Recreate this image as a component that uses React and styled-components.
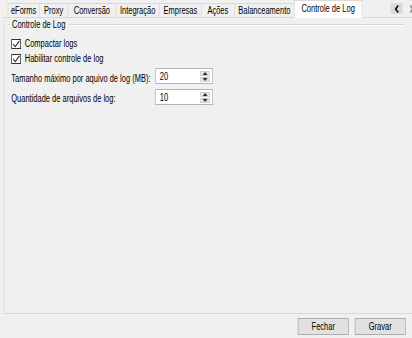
import React from "react";
import styled, { createGlobalStyle } from "styled-components";

// a captura original foi comprimida na horizontal (~0.75), então a janela
// é montada em 550px e achatada com scaleX
const SQUEEZE = 0.75;

const GlobalStyle = createGlobalStyle`
  html, body {
    margin: 0;
    overflow: hidden;
    background: #f0f0f0;
  }
  body {
    font-family: "Liberation Sans", Arial, sans-serif;
    font-size: 10px;
    color: #000;
  }
`;

// abas do controle (largura vem da tela original)
const tabs = [
  { label: "eForms", width: 43 },
  { label: "Proxy", width: 39 },
  { label: "Conversão", width: 65 },
  { label: "Integração", width: 59 },
  { label: "Empresas", width: 57 },
  { label: "Ações", width: 45 },
  { label: "Balanceamento", width: 81 },
  { label: "Controle de Log", width: 91, active: true },
];

const Check = () => (
  <svg width="11" height="8" viewBox="0 0 11 8">
    <path d="M1.5 3.8 L4.3 6.6 L9.8 1" fill="none" stroke="#222" strokeWidth="1.2" />
  </svg>
);

const Arrow = ({ up }) => (
  <svg width="7" height="3" viewBox="0 0 7 3">
    <path d={up ? "M0 3 L3.5 0 L7 3 Z" : "M0 0 L3.5 3 L7 0 Z"} fill="#333" />
  </svg>
);

const Chevron = ({ left, color }) => (
  <svg width="8" height="8" viewBox="0 0 8 8">
    <path
      d={left ? "M6 0.5 L2.5 4 L6 7.5" : "M2 0.5 L5.5 4 L2 7.5"}
      fill="none"
      stroke={color}
      strokeWidth="2"
    />
  </svg>
);

const SpinBox = ({ value }) => (
  <Spin>
    <SpinValue>{value}</SpinValue>
    <SpinButtons>
      <SpinBtn>
        <Arrow up />
      </SpinBtn>
      <SpinBtn>
        <Arrow />
      </SpinBtn>
    </SpinButtons>
  </Spin>
);

const App = () => {
  return (
    <>
      <GlobalStyle />
      <Window>
        <TabControl>
          <TabStrip>
            {tabs.map((t) => (
              <Tab key={t.label} $width={t.width} $active={t.active}>
                {t.label}
              </Tab>
            ))}
            <Scroller>
              <ScrollBtn $pressed>
                <Chevron left color="#111" />
              </ScrollBtn>
              <ScrollBtn>
                <Chevron color="#8a8a8a" />
              </ScrollBtn>
            </Scroller>
          </TabStrip>

          <TabPage>
            <GroupBox>
              <Legend>
                <LegendStub />
                <LegendText>Controle de Log</LegendText>
                <LegendLine />
              </Legend>

              <Checks>
                <CheckRow>
                  <CheckBox>
                    <Check />
                  </CheckBox>
                  Compactar logs
                </CheckRow>
                <CheckRow>
                  <CheckBox>
                    <Check />
                  </CheckBox>
                  Habilitar controle de log
                </CheckRow>
              </Checks>

              <Fields>
                <FieldLabel $offset={4}>Tamanho máximo por aquivo de log (MB):</FieldLabel>
                <SpinBox value="20" />
                <FieldLabel $offset={2}>Quantidade de arquivos de log:</FieldLabel>
                <SpinBox value="10" />
              </Fields>
            </GroupBox>
          </TabPage>
        </TabControl>

        <ButtonBar>
          <Button>Fechar</Button>
          <Button>Gravar</Button>
        </ButtonBar>
      </Window>
    </>
  );
};
export default App;

// janela inteira
const Window = styled.div`
  width: 550px;
  height: 338px;
  overflow: hidden;
  display: flex;
  flex-direction: column;
  background: #f0f0f0;
  transform: scaleX(${SQUEEZE});
  transform-origin: 0 0;
`;

const TabControl = styled.div`
  flex: 1;
  display: flex;
  flex-direction: column;
`;

const TabStrip = styled.div`
  height: 18px;
  display: flex;
  align-items: flex-end;
  padding-left: 11px;
  position: relative;
  z-index: 1;
`;

const Tab = styled.div`
  width: ${(p) => p.$width}px;
  height: ${(p) => (p.$active ? 18 : 15)}px;
  box-sizing: border-box;
  display: flex;
  align-items: ${(p) => (p.$active ? "flex-start" : "center")};
  justify-content: center;
  padding-top: ${(p) => (p.$active ? 2 : 0)}px;
  background: ${(p) => (p.$active ? "#ffffff" : "#f0f0f0")};
  border: 1px solid #d9d9d9;
  border-bottom: ${(p) => (p.$active ? "none" : "1px solid #d9d9d9")};
  margin-left: -1px;
  white-space: nowrap;
`;

const Scroller = styled.div`
  margin-left: auto;
  align-self: flex-start;
  margin-top: 3px;
  margin-right: -7px;
  display: flex;
  gap: 4px;
`;

const ScrollBtn = styled.div`
  width: 16px;
  height: 11px;
  display: flex;
  align-items: center;
  justify-content: center;
  background: ${(p) => (p.$pressed ? "#dadada" : "#f0f0f0")};
`;

// página da aba
const TabPage = styled.div`
  flex: 1;
  margin-top: -1px;
  margin-left: 5px;
  border: 1px solid #d9d9d9;
  border-right: none;
  background: #f0f0f0;
`;

const GroupBox = styled.div`
  margin: 0 10px 0 3px;
`;

const Legend = styled.div`
  height: 13px;
  display: flex;
  align-items: center;
`;

const LegendStub = styled.div`
  width: 4px;
  height: 0;
  border-top: 1px solid #d5d5d5;
  border-bottom: 1px solid #fff;
`;

const LegendText = styled.span`
  padding: 0 5px 0 3px;
  white-space: nowrap;
`;

const LegendLine = styled.div`
  flex: 1;
  height: 0;
  border-top: 1px solid #d5d5d5;
  border-bottom: 1px solid #fff;
`;

const Checks = styled.div`
  display: flex;
  flex-direction: column;
  margin-top: 5px;
  padding-left: 6px;
`;

const CheckRow = styled.label`
  height: 15px;
  display: flex;
  align-items: center;
  gap: 5px;
`;

const CheckBox = styled.span`
  width: 13px;
  height: 10px;
  box-sizing: border-box;
  border: 1px solid #333;
  background: #fff;
  display: flex;
  align-items: center;
  justify-content: center;
`;

const Fields = styled.div`
  display: grid;
  grid-template-columns: 192px 77px;
  row-gap: 5px;
  margin-top: 2px;
  padding-left: 6px;
`;

const FieldLabel = styled.span`
  align-self: center;
  padding-top: ${(p) => p.$offset}px;
  white-space: nowrap;
`;

const Spin = styled.div`
  height: 16px;
  box-sizing: border-box;
  border: 1px solid #b5b5b5;
  background: #fff;
  display: flex;
  align-items: center;
  padding: 0 3px 0 5px;
`;

const SpinValue = styled.span`
  flex: 1;
`;

const SpinButtons = styled.div`
  display: flex;
  flex-direction: column;
  gap: 1px;
`;

const SpinBtn = styled.div`
  width: 13px;
  height: 5px;
  background: #e6e6e6;
  border: 1px solid #cfcfcf;
  box-sizing: border-box;
  display: flex;
  align-items: center;
  justify-content: center;
`;

// botões de baixo
const ButtonBar = styled.div`
  height: 24px;
  display: flex;
  justify-content: flex-end;
  align-items: flex-start;
  gap: 8px;
  padding: 4px 9px 0 0;
  box-sizing: border-box;
`;

const Button = styled.button`
  width: 68px;
  height: 17px;
  padding: 0;
  font: inherit;
  color: #000;
  background: #e1e1e1;
  border: 1px solid #adadad;
`;
